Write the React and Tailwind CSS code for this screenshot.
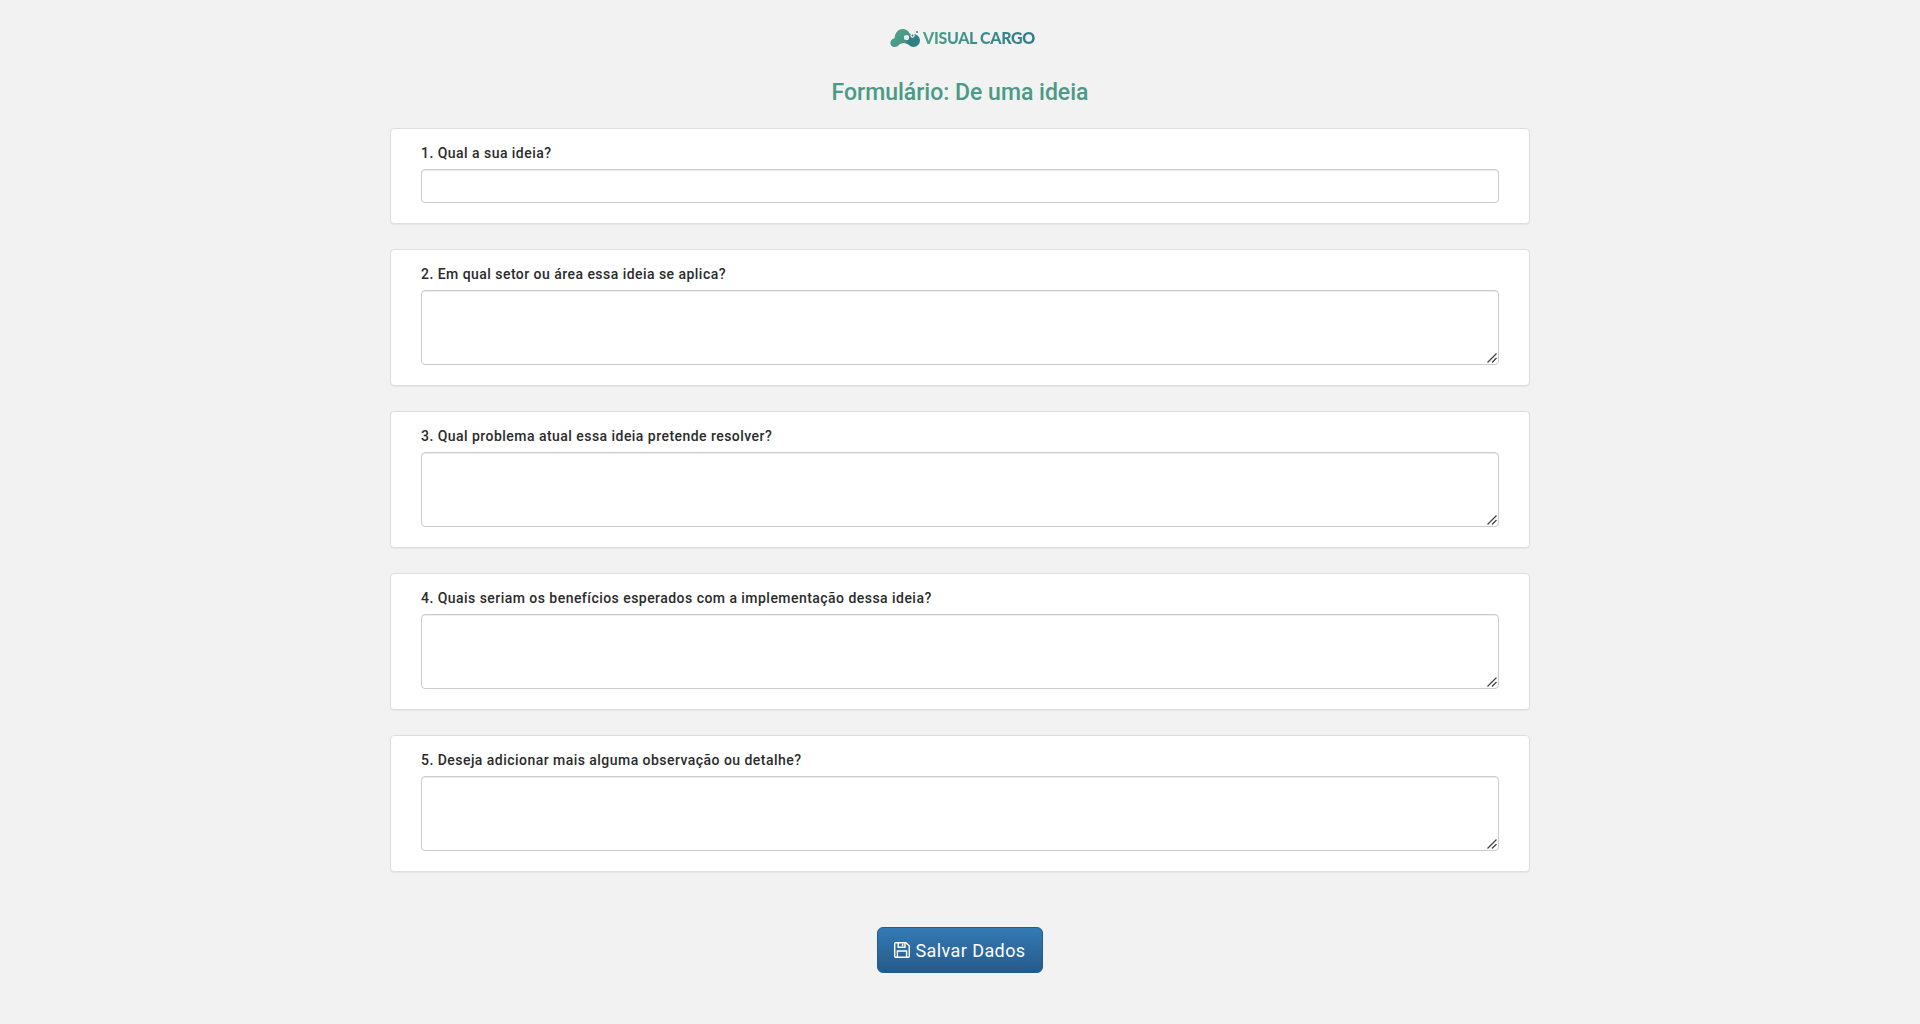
const QUESTIONS = [
  { label: '1. Qual a sua ideia?', single: true },
  { label: '2. Em qual setor ou área essa ideia se aplica?' },
  { label: '3. Qual problema atual essa ideia pretende resolver?' },
  { label: '4. Quais seriam os benefícios esperados com a implementação dessa ideia?' },
  { label: '5. Deseja adicionar mais alguma observação ou detalhe?' },
]

function Logo() {
  return (
    <div className="flex items-center h-[20px] ml-[5px]">
      <svg width="31" height="20" viewBox="0 0 31 20">
        <defs>
          <linearGradient id="cloud" x1="0" y1="0" x2="1" y2="0.6">
            <stop offset="0" stopColor="#55a68a" />
            <stop offset="1" stopColor="#3f9086" />
          </linearGradient>
        </defs>
        {/* cloud */}
        <path
          d="M4.5 19C1.5 19 0 16.5 0.5 14C1 12 2.5 10.8 4.5 10.3C5 5 8 1 12.5 1C16 1 18.5 2.5 19.5 5.5C21.5 6 23 7.5 24 9L22 17.5C19 17 16 15.5 14 15C12 15.2 10.5 15.5 9.5 16.5C8 18.2 6.5 19 4.5 19Z"
          fill="url(#cloud)"
        />
        {/* round body on the right */}
        <circle cx="23.5" cy="12.5" r="6.5" fill="#2f7f85" />
        <circle cx="16.5" cy="9.5" r="2.6" fill="#f2f2f2" />
        <circle cx="22.5" cy="7.5" r="2.2" fill="#f2f2f2" />
        <circle cx="22.5" cy="7.5" r="1" fill="#2f7f85" />
        <circle cx="27" cy="4" r="1.1" fill="#3f8f86" />
      </svg>
      <span className="ml-[2px] font-['Lato',sans-serif] text-[16px] font-black leading-none tracking-[-0.35px] text-transparent bg-clip-text bg-gradient-to-r from-[#4fa088] to-[#2c7a88]">
        VISUAL CARGO
      </span>
    </div>
  )
}

function SaveIcon() {
  return (
    <svg width="16" height="16" viewBox="0 0 16 16" fill="none" stroke="currentColor" strokeWidth="1.4">
      <path d="M1.7 0.7H12L15.3 4V14.3A1 1 0 0 1 14.3 15.3H1.7A1 1 0 0 1 0.7 14.3V1.7A1 1 0 0 1 1.7 0.7Z" />
      <path d="M4.2 0.7V5.3H11V0.7" />
      <path d="M3.4 15.3V9H12.6V15.3" />
      <path d="M8.6 1.8V4.2" />
    </svg>
  )
}

function QuestionCard({ label, single }) {
  return (
    <div className="bg-white border border-[#dedede] rounded-[4px] shadow-[0_1px_1px_rgba(0,0,0,0.05)] pt-[14px] pb-[20px] px-[30px] mb-[25px]">
      <label className="block text-[14px] leading-[20px] font-medium tracking-[0.46px] text-[#2b2b2b] mb-[6px]">{label}</label>
      {single ? (
        <input type="text" className="block w-full h-[34px] bg-white border border-[#ccc] rounded-[4px] shadow-[inset_0_1px_1px_rgba(0,0,0,0.075)] outline-none" />
      ) : (
        <div className="relative">
          <textarea className="block w-full h-[75px] resize-none bg-white border border-[#ccc] rounded-[4px] shadow-[inset_0_1px_1px_rgba(0,0,0,0.075)] outline-none" />
          <svg width="10" height="10" viewBox="0 0 10 10" className="absolute right-[2px] bottom-[2px]">
            <path d="M0.5 9.5L9.5 0.5M5 9.5L9.5 5" stroke="#444" strokeWidth="1.3" fill="none" />
          </svg>
        </div>
      )}
    </div>
  )
}

export default function App() {
  return (
    <div className="min-h-[1024px] bg-[#f2f2f2] font-['Roboto',sans-serif] flex flex-col items-center pt-[28px]">
      <Logo />
      <h1 className="mt-[30px] mb-[20px] text-[23px] leading-[30px] font-medium text-[#4a9a86]">Formulário: De uma ideia</h1>
      <div className="w-[1140px]">
        {QUESTIONS.map(q => (
          <QuestionCard key={q.label} label={q.label} single={q.single} />
        ))}
      </div>
      <button
        type="button"
        className="mt-[30px] w-[166px] h-[46px] flex items-center justify-center gap-[5px] rounded-[6px] border border-[#265a88] bg-gradient-to-b from-[#337ab7] to-[#265a88] text-white text-[18px] tracking-[0.42px]"
      >
        <SaveIcon />
        Salvar Dados
      </button>
    </div>
  )
}
